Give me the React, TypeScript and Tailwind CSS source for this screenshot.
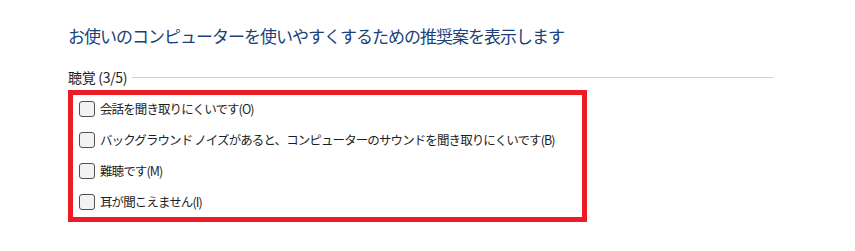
const font = '[font-family:"Noto_Sans_CJK_JP","Noto_Sans",sans-serif]'

const options = [
  '会話を聞き取りにくいです(O)',
  'バックグラウンド ノイズがあると、コンピューターのサウンドを聞き取りにくいです(B)',
  '難聴です(M)',
  '耳が聞こえません(I)',
]

export default function App() {
  return (
    <main className={`h-[251px] w-[855px] bg-white pl-[68px] pt-[23px] ${font}`}>
      <h1 className="whitespace-nowrap text-[17px] leading-[26px] tracking-[-1px] text-[#1a3f7a]">
        お使いのコンピューターを使いやすくするための推奨案を表示します
      </h1>

      <div className="mt-[19px] flex w-[705px] items-center gap-[5px]">
        <span className="whitespace-nowrap text-[14px] leading-[18px] tracking-[-0.3px] text-[#1e1e1e]">
          聴覚 (3/5)
        </span>
        <div className="h-px flex-1 bg-[#d0d0d0]" />
      </div>

      <div className="mt-[4px] flex w-[519px] flex-col gap-[15px] border-[5px] border-[#ed1c24] pb-[7px] pl-[6px] pt-[6px]">
        {options.map((text) => (
          <label key={text} className="flex items-center gap-[5px]">
            <span className="h-[16px] w-[16px] shrink-0 rounded-[3px] border border-[#505050] bg-[#f2f2f2]" />
            <span className="whitespace-nowrap text-[12.5px] leading-[16px] tracking-[-0.9px] text-[#1e1e1e]">
              {text}
            </span>
          </label>
        ))}
      </div>
    </main>
  )
}
